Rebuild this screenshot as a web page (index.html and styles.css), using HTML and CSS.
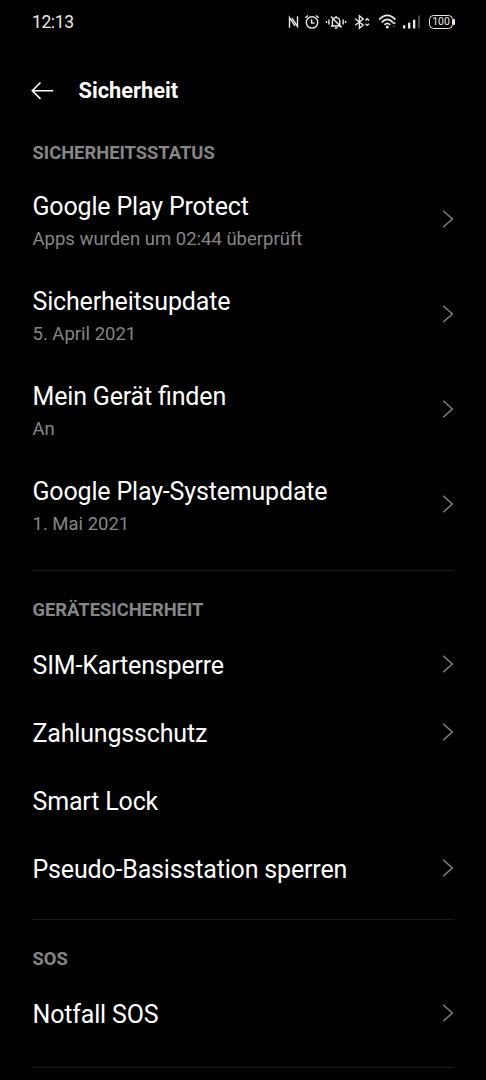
FILE: index.html
```html
<!DOCTYPE html>
<html lang="de">
<head>
  <meta charset="UTF-8">
  <title>Sicherheit</title>
  <meta name="viewport" content="width=device-width, initial-scale=1.0">
  <link rel="stylesheet" href="styles.css">
</head>
<body>
  <svg class="sprite" aria-hidden="true">
    <symbol id="chevron" viewBox="0 0 12 20">
      <path d="M1.2 1.7 10.3 10 1.2 18.3" fill="none" stroke="currentColor" stroke-width="1.5"/>
    </symbol>
  </svg>
  <div class="screen">
    <div class="status-bar">
      <span class="clock">12:13</span>
      <div class="status-icons">
        <!-- nfc -->
        <svg class="nfc" width="11" height="14" viewBox="0 0 11 14">
          <path d="M1.5 12.8V2.5L7 10.8M4 3.2 9.5 11.5V1.2" />
        </svg>
        <!-- alarm -->
        <svg class="alarm" width="16" height="16" viewBox="0 0 16 16">
          <circle cx="8" cy="8.4" r="5.7"/>
          <path d="M7.6 5.2v3.9h3M1.2 3.8 4 1.5M14.8 3.8 12 1.5"/>
        </svg>
        <!-- muted bell -->
        <svg class="bell" width="22" height="16" viewBox="0 0 22 16">
          <path d="M5.8 12h10.6M7.4 12V7.6c0-2.5 1.4-4 3.7-4s3.7 1.5 3.7 4V12M11.1 3.6V2M9.7 14h2.8M5.9 2.6 16.5 13.5M3.9 5.5v5M1.5 7v2M18.2 5.5v5M20.6 7v2"/>
        </svg>
        <!-- bluetooth -->
        <svg class="bluetooth" width="16" height="16" viewBox="0 0 16 16">
          <path d="M1.2 4.7 9.2 11 5.4 14.3V1.7L9.2 5 1.2 11.3"/>
          <path d="M11.4 6.5 13.2 4.8 15 6.5M11.4 9.7 13.2 11.4 15 9.7"/>
        </svg>
        <!-- wifi -->
        <svg class="wifi" width="20" height="16" viewBox="0 0 20 16">
          <path d="M1.3 5.6C6-.1 12.6-.1 17.3 5.6M3.8 8.3c3.4-3.8 7.6-3.8 11 0M6.4 10.8c1.8-1.8 4-1.8 5.8 0" stroke-width="1.8"/>
          <circle class="solid" cx="9.3" cy="13" r="1.5"/>
          <path class="solid" d="M14 9.7 16 7.5 18 9.7z"/>
          <path class="dim" d="M14 11.6h4L16 13.8z"/>
        </svg>
        <!-- mobile signal -->
        <svg class="signal" width="19" height="14" viewBox="0 0 19 14">
          <path class="solid" d="M1 10.3h2.3v3.2H1zM6 7.8h2.3v5.7H6zM11 4.8h2.3v8.7H11z"/>
          <path class="dim" d="M15.9.5H18v13h-2.1z"/>
        </svg>
        <div class="battery">100</div>
      </div>
    </div>

    <div class="app-bar">
      <svg class="back" width="24" height="20" viewBox="0 0 24 20">
        <path d="M22.2 9.7H1.3M9.5 1.5 1.3 9.7 9.5 17.9"/>
      </svg>
      <h1>Sicherheit</h1>
    </div>

    <div class="section">
      <h2>SICHERHEITSSTATUS</h2>
      <div class="row tall">
        <div>
          <div class="title">Google Play Protect</div>
          <div class="summary">Apps wurden um 02:44 überprüft</div>
        </div>
        <svg class="chevron"><use href="#chevron"/></svg>
      </div>
      <div class="row tall">
        <div>
          <div class="title">Sicherheitsupdate</div>
          <div class="summary">5. April 2021</div>
        </div>
        <svg class="chevron"><use href="#chevron"/></svg>
      </div>
      <div class="row tall">
        <div>
          <div class="title">Mein Gerät finden</div>
          <div class="summary">An</div>
        </div>
        <svg class="chevron"><use href="#chevron"/></svg>
      </div>
      <div class="row tall">
        <div>
          <div class="title">Google Play-Systemupdate</div>
          <div class="summary">1. Mai 2021</div>
        </div>
        <svg class="chevron"><use href="#chevron"/></svg>
      </div>
    </div>

    <div class="section">
      <h2>GERÄTESICHERHEIT</h2>
      <div class="row">
        <div class="title">SIM-Kartensperre</div>
        <svg class="chevron"><use href="#chevron"/></svg>
      </div>
      <div class="row">
        <div class="title">Zahlungsschutz</div>
        <svg class="chevron"><use href="#chevron"/></svg>
      </div>
      <div class="row">
        <div class="title">Smart Lock</div>
      </div>
      <div class="row">
        <div class="title">Pseudo-Basisstation sperren</div>
        <svg class="chevron"><use href="#chevron"/></svg>
      </div>
    </div>

    <div class="section last">
      <h2>SOS</h2>
      <div class="row">
        <div class="title">Notfall SOS</div>
        <svg class="chevron"><use href="#chevron"/></svg>
      </div>
    </div>
  </div>
</body>
</html>
```
FILE: styles.css
```css
/* Reset and base styles */
* { box-sizing: border-box; margin: 0; padding: 0; }
body {
  font-family: Roboto, Arial, sans-serif;
  background: #000;
  color: #fff;
}
.sprite {
  display: none;
}
.screen {
  width: 486px;
  height: 1080px;
  padding: 0 32px;
  overflow: hidden;
}

/* Status bar */
.status-bar {
  display: flex;
  justify-content: space-between;
  align-items: center;
  height: 44px;
  margin-right: -1px;
}
.clock {
  font-size: 17.5px;
  letter-spacing: -0.4px;
  color: #e8e8e8;
}
.status-icons {
  display: flex;
  align-items: center;
}
.status-icons svg {
  fill: none;
  stroke: #e8e8e8;
  stroke-width: 1.4;
}
.status-icons .solid {
  fill: #e8e8e8;
  stroke: none;
}
.status-icons .dim {
  fill: #444;
  stroke: none;
}
.alarm { margin-left: 5px; }
.bell { margin-left: 5px; }
.bluetooth { margin-left: 7px; }
.wifi { margin-left: 8px; }
.signal { margin-left: 4px; }
.battery {
  position: relative;
  width: 24px;
  height: 14px;
  margin: 0 2px 0 8px;
  border: 1.5px solid #e8e8e8;
  border-radius: 4.5px;
  font-size: 10.5px;
  line-height: 12.5px;
  text-align: center;
  color: #e8e8e8;
}
.battery::after {
  content: "";
  position: absolute;
  top: 3px;
  right: -3px;
  width: 2px;
  height: 6px;
  border-radius: 0 1px 1px 0;
  background: #e8e8e8;
}

/* Header */
.app-bar {
  display: flex;
  align-items: center;
  gap: 23.5px;
  height: 93px;
  margin-left: -1px;
}
.back {
  fill: none;
  stroke: #fff;
  stroke-width: 1.6;
}
h1 {
  font-size: 21.8px;
  font-weight: 700;
}

/* Preference list */
.section {
  border-bottom: 1px solid #1c1c1c;
  padding-bottom: 18px;
}
.section + .section {
  padding: 22px 0 17px;
}
.section.last {
  padding-bottom: 20px;
}
h2 {
  height: 35px;
  padding-left: 0.5px;
  font-size: 18.35px;
  line-height: 32px;
  font-weight: 700;
  color: #868686;
}
.section + .section h2 {
  height: 37px;
  line-height: 34px;
}
.row {
  display: flex;
  justify-content: space-between;
  align-items: center;
  height: 68px;
  padding-left: 0.5px;
}
.title {
  padding-top: 4px;
  font-size: 25px;
  line-height: 34px;
  letter-spacing: -0.17px;
  font-feature-settings: "liga" 1; /* keep the fi ligature despite the spacing */
}
.summary {
  font-size: 18.5px;
  line-height: 24px;
  margin-top: 3px;
  color: #868686;
}
.chevron {
  width: 12px;
  height: 20px;
  color: #808080;
}
.row.tall {
  height: 95px;
}
.row.tall .title {
  padding-top: 1px;
}
.row.tall .chevron {
  margin-bottom: 1px;
}
```
